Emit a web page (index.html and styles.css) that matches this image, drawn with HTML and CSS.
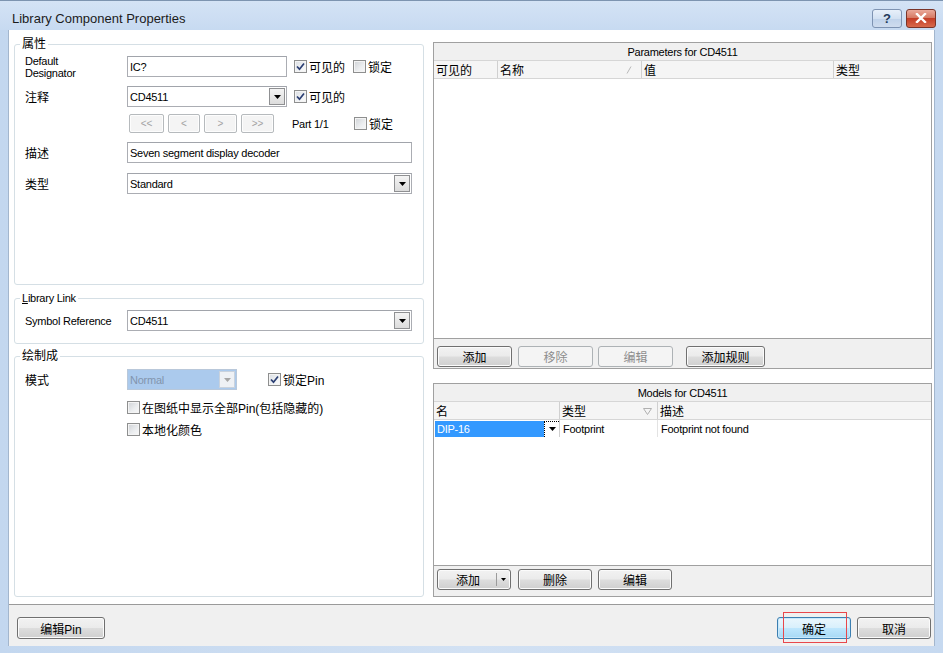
FILE: index.html
```html
<!DOCTYPE html>
<html>
<head>
<meta charset="utf-8">
<link rel="stylesheet" href="styles.css">
</head>
<body>
<div class="window">
  <div class="titlebar">
    <div class="title">Library Component Properties</div>
    <div class="tbtn help">?</div>
    <div class="tbtn close"><svg width="12" height="10" viewBox="0 0 12 10"><path d="M2 1 L10 9 M10 1 L2 9" stroke="#fff" stroke-width="2.4" stroke-linecap="square"/></svg></div>
  </div>
  <div class="client">
    <div class="main">
      <div class="left">
        <fieldset class="grp g1">
          <legend>属性</legend>
          <div class="row r1">
            <div class="lbl en two">Default<br>Designator</div>
            <div class="input w160 en">IC?</div>
            <div class="chk ml7"><span class="cb on"><svg width="9" height="9" viewBox="0 0 9 9"><path d="M1 4.5 L3.5 7.2 L8 1.5" fill="none" stroke="#2b3f73" stroke-width="1.7"/></svg></span>可见的</div>
            <div class="chk ml8"><span class="cb"></span>锁定</div>
          </div>
          <div class="row r2">
            <div class="lbl">注释</div>
            <div class="combo w160 en"><span class="ctext">CD4511</span><span class="dd"><svg width="7" height="4" viewBox="0 0 7 4"><path d="M0 0 H7 L3.5 4 Z" fill="#000"/></svg></span></div>
            <div class="chk ml7"><span class="cb on"><svg width="9" height="9" viewBox="0 0 9 9"><path d="M1 4.5 L3.5 7.2 L8 1.5" fill="none" stroke="#2b3f73" stroke-width="1.7"/></svg></span>可见的</div>
          </div>
          <div class="row r3">
            <div class="lbl"></div>
            <div class="nav">
              <div class="nbtn w35">&lt;&lt;</div>
              <div class="nbtn w32">&lt;</div>
              <div class="nbtn w33">&gt;</div>
              <div class="nbtn w33">&gt;&gt;</div>
            </div>
            <div class="part en">Part 1/1</div>
            <div class="chk"><span class="cb"></span>锁定</div>
          </div>
          <div class="row r4">
            <div class="lbl">描述</div>
            <div class="input w285 en">Seven segment display decoder</div>
          </div>
          <div class="row r5">
            <div class="lbl">类型</div>
            <div class="combo w285 en"><span class="ctext">Standard</span><span class="dd"><svg width="7" height="4" viewBox="0 0 7 4"><path d="M0 0 H7 L3.5 4 Z" fill="#000"/></svg></span></div>
          </div>
        </fieldset>

        <fieldset class="grp g2">
          <legend class="en"><u>L</u>ibrary Link</legend>
          <div class="row r6">
            <div class="lbl en">Symbol Reference</div>
            <div class="combo w285 en"><span class="ctext">CD4511</span><span class="dd"><svg width="7" height="4" viewBox="0 0 7 4"><path d="M0 0 H7 L3.5 4 Z" fill="#000"/></svg></span></div>
          </div>
        </fieldset>

        <fieldset class="grp g3">
          <legend>绘制成</legend>
          <div class="row r7">
            <div class="lbl">模式</div>
            <div class="combo dis w110 en"><span class="ctext">Normal</span><span class="dd"><svg width="7" height="4" viewBox="0 0 7 4"><path d="M0 0 H7 L3.5 4 Z" fill="#a6a6a6"/></svg></span></div>
            <div class="chk ml31"><span class="cb on"><svg width="9" height="9" viewBox="0 0 9 9"><path d="M1 4.5 L3.5 7.2 L8 1.5" fill="none" stroke="#2b3f73" stroke-width="1.7"/></svg></span>锁定Pin</div>
          </div>
          <div class="row r8">
            <div class="lbl"></div>
            <div class="chk"><span class="cb"></span>在图纸中显示全部Pin(包括隐藏的)</div>
          </div>
          <div class="row r9">
            <div class="lbl"></div>
            <div class="chk"><span class="cb"></span>本地化颜色</div>
          </div>
        </fieldset>
      </div>

      <div class="right">
        <div class="panel params">
          <div class="ptitle en">Parameters for CD4511</div>
          <div class="phead">
            <div class="hc pc1">可见的</div>
            <div class="hc pc2">名称<span class="sort"><svg width="6" height="8" viewBox="0 0 6 8"><path d="M1 7.5 L5 0.5" stroke="#b8b8b8" stroke-width="1"/></svg></span></div>
            <div class="hc pc3">值</div>
            <div class="hc pc4">类型</div>
          </div>
          <div class="plist"></div>
          <div class="pbtns">
            <div class="btn w75">添加</div>
            <div class="btn w75 disabled ml6">移除</div>
            <div class="btn w75 disabled ml5">编辑</div>
            <div class="btn w79 ml13">添加规则</div>
          </div>
        </div>

        <div class="panel models">
          <div class="ptitle en">Models for CD4511</div>
          <div class="phead">
            <div class="hc mc1">名</div>
            <div class="hc mc2">类型<span class="sort2"><svg width="9" height="7" viewBox="0 0 9 7"><path d="M0.5 0.5 H8.5 L4.5 6.5 Z" fill="none" stroke="#b0b0b0" stroke-width="1"/></svg></span></div>
            <div class="hc mc3">描述</div>
          </div>
          <div class="mrow">
            <div class="rc mc1 sel"><span class="seltext en">DIP-16</span><span class="rdd"><svg width="7" height="4" viewBox="0 0 7 4"><path d="M0 0 H7 L3.5 4 Z" fill="#000"/></svg></span></div>
            <div class="rc mc2 en">Footprint</div>
            <div class="rc mc3 en">Footprint not found</div>
          </div>
          <div class="plist"></div>
          <div class="pbtns mb">
            <div class="btn split w74"><span class="sl">添加</span><span class="sr"><svg width="5" height="3" viewBox="0 0 5 3"><path d="M0 0 H5 L2.5 3 Z" fill="#000"/></svg></span></div>
            <div class="btn w74 ml7">删除</div>
            <div class="btn w74 ml6">编辑</div>
          </div>
        </div>
      </div>
    </div>

    <div class="footer">
      <div class="btn fb w88">编辑Pin</div>
      <div class="spacer"></div>
      <div class="okwrap">
        <div class="btn fb w74 default">确定</div>
        <div class="redmark"></div>
      </div>
      <div class="btn fb w74 ml6">取消</div>
    </div>
  </div>
</div>
</body>
</html>
```

FILE: styles.css
```css
* { box-sizing: border-box; }

body {
  margin: 0;
  font-family: "Liberation Sans", "Noto Sans CJK SC", sans-serif;
  font-size: 12px;
  color: #000;
  background: #fff;
}

.en { font-size: 11px; letter-spacing: -0.25px; }

.window {
  width: 943px;
  height: 653px;
  display: flex;
  flex-direction: column;
  background: linear-gradient(90deg, #c3d7ef 0%, #d2e1f3 50%, #c6d9f0 100%);
  border-top: 1px solid #7d94b0;
}

.titlebar {
  height: 29px;
  display: flex;
  align-items: center;
  padding: 5px 7px 0 12px;
  background: linear-gradient(180deg, #d4e3f5 0%, #c7daf1 100%);
}

.title {
  flex: 1;
  font-size: 13px;
  color: #1b1b1b;
}

.tbtn {
  height: 19px;
  width: 30px;
  border-radius: 3px;
  display: flex;
  align-items: center;
  justify-content: center;
}

.help {
  border: 1px solid #7e93b2;
  background: linear-gradient(180deg, #e8f0fa 0%, #d3e1f2 50%, #bfd2ea 51%, #cfdcee 100%);
  color: #23395a;
  font-size: 13px;
  font-weight: bold;
  margin-right: 4px;
}

.close {
  border: 1px solid #7a3428;
  background: linear-gradient(180deg, #eaa99a 0%, #d67a64 45%, #c43e27 50%, #d86a4c 100%);
}

.client {
  margin: 0 8px 7px 8px;
  flex: 1;
  display: flex;
  flex-direction: column;
  background: #fff;
  border-left: 1px solid #a3b6cd;
  border-right: 1px solid #a3b6cd;
}

.main {
  height: 574px;
  display: flex;
  padding: 7px 2px 7px 5px;
  background: #fff;
}

.left {
  width: 410px;
  display: flex;
  flex-direction: column;
  margin-right: 9px;
}

.grp {
  margin: 0;
  border: 1px solid #d5dfe5;
  border-radius: 3px;
  padding: 5px 11px 0 10px;
  min-width: 0;
}

.grp legend {
  padding: 0 2px;
  margin-left: -5px;
  line-height: 14px;
  height: 14px;
}

.g1 { padding-bottom: 90px; }
.g2 { margin-top: 6px; padding-bottom: 12px; }
.g3 { margin-top: 5px; padding-top: 6px; flex: 1; }

.row {
  display: flex;
  align-items: center;
  height: 21px;
}

.r2 { margin-top: 9px; }
.r3 { margin-top: 7px; height: 19px; }
.r4 { margin-top: 9px; }
.r5 { margin-top: 10px; }
.r8 { margin-top: 9px; height: 16px; }
.r9 { margin-top: 6px; height: 16px; }

.lbl {
  width: 102px;
  flex-shrink: 0;
}

.lbl.two { line-height: 12px; }

.input, .combo {
  height: 21px;
  border: 1px solid #abadb3;
  border-top-color: #a1a4ab;
  display: flex;
  align-items: center;
  padding-left: 2px;
  background: #fff;
}

.combo { padding-right: 1px; }

.ctext { flex: 1; }

.dd {
  width: 16px;
  height: 17px;
  border: 1px solid #8f9092;
  background: linear-gradient(180deg, #f4f4f4 0%, #dcdcdc 100%);
  display: flex;
  align-items: center;
  justify-content: center;
}

.combo.dis {
  background: #abcaed;
  border-color: #b9c8da;
  color: #8295ae;
}

.combo.dis .dd {
  background: #eef1f5;
  border-color: #c9d2dd;
}

.w110 { width: 110px; }
.w160 { width: 160px; }
.w285 { width: 285px; }

.chk {
  display: flex;
  align-items: center;
  white-space: nowrap;
}

.cb {
  width: 13px;
  height: 13px;
  border: 1px solid #8e8f8f;
  background: linear-gradient(135deg, #cfd2d6 0%, #eceef0 60%, #f8f8f8 100%);
  box-shadow: inset 0 0 0 1px #f4f4f4;
  margin-right: 2px;
  display: flex;
  align-items: center;
  justify-content: center;
}

.cb.on {
  background: linear-gradient(135deg, #d9dde2 0%, #f1f3f5 60%, #fbfbfb 100%);
}

.ml7 { margin-left: 7px; }
.ml8 { margin-left: 8px; }
.ml31 { margin-left: 31px; }
.ml5 { margin-left: 5px; }
.ml6 { margin-left: 6px; }
.ml13 { margin-left: 13px; }

.nav {
  width: 160px;
  display: flex;
  gap: 4px;
  padding-left: 2px;
}

.nbtn {
  height: 19px;
  border: 1px solid #b6babd;
  border-radius: 2px;
  background: #f4f4f4;
  box-shadow: inset 0 0 0 1px #fdfdfd;
  color: #a3a3a3;
  font-size: 10px;
  display: flex;
  align-items: center;
  justify-content: center;
}

.w32 { width: 32px; }
.w33 { width: 33px; }
.w35 { width: 35px; }

.part {
  width: 67px;
  padding-left: 5px;
}

.right {
  width: 500px;
  display: flex;
  flex-direction: column;
}

.panel {
  border: 1px solid #a0a0a0;
  display: flex;
  flex-direction: column;
  background: #fff;
}

.params {
  margin-top: 5px;
  height: 327px;
}

.models {
  margin-top: 14px;
  flex: 1;
}

.ptitle {
  height: 18px;
  background: #f0f0f0;
  border-bottom: 1px solid #d6d6d6;
  display: flex;
  align-items: center;
  justify-content: center;
}

.phead {
  height: 18px;
  display: flex;
  background: #f5f5f5;
  border-bottom: 1px solid #d6d6d6;
}

.hc {
  height: 100%;
  display: flex;
  align-items: center;
  padding-left: 2px;
  border-right: 1px solid #d0d0d0;
  position: relative;
}

.pc1 { width: 64px; }
.pc2 { width: 144px; }
.pc3 { width: 192px; }
.pc4 { flex: 1; border-right: none; }

.sort {
  position: absolute;
  left: 128px;
  top: 5px;
  display: flex;
}

.sort2 {
  position: absolute;
  left: 83px;
  top: 6px;
  display: flex;
}

.mc1 { width: 126px; }
.mc2 { width: 98px; }
.mc3 { flex: 1; border-right: none; }

.plist { flex: 1; background: #fff; }

.mrow {
  height: 17px;
  display: flex;
}

.rc {
  height: 100%;
  display: flex;
  align-items: center;
  padding-left: 3px;
  border-right: 1px solid #e3e3e3;
}

.rc.mc3 { border-right: none; }

.rc.sel {
  padding-left: 1px;
  padding-right: 0;
  border-right: 1px solid #d0d0d0;
}

.seltext {
  width: 109px;
  height: 16px;
  background: #3399ff;
  color: #fff;
  display: flex;
  align-items: center;
  padding-left: 2px;
}

.rdd {
  flex: 1;
  height: 16px;
  border-left: 1px dotted #000;
  border-top: 1px dotted #000;
  display: flex;
  align-items: center;
  justify-content: center;
}

.pbtns {
  height: 30px;
  border-top: 1px solid #a0a0a0;
  background: #f0f0f0;
  display: flex;
  align-items: flex-start;
  padding: 7px 0 0 3px;
}

.pbtns.mb {
  height: 31px;
  padding-top: 3px;
}

.btn {
  height: 21px;
  border: 1px solid #707070;
  border-radius: 3px;
  background: linear-gradient(180deg, #f2f2f2 0%, #ebebeb 48%, #dddddd 52%, #cfcfcf 100%);
  box-shadow: inset 0 0 0 1px #fbfbfb;
  display: flex;
  align-items: center;
  justify-content: center;
  flex-shrink: 0;
}

.btn.disabled {
  border-color: #adb2b5;
  background: #f4f4f4;
  box-shadow: none;
  color: #8d8d8d;
}

.w74 { width: 74px; }
.w75 { width: 75px; }
.w79 { width: 79px; }
.w88 { width: 88px; }

.split { justify-content: flex-start; }
.split .sl {
  width: 58px;
  text-align: center;
  padding-left: 2px;
}
.split .sr {
  flex: 1;
  height: 13px;
  border-left: 1px solid #9b9b9b;
  display: flex;
  align-items: center;
  justify-content: center;
}

.footer {
  flex: 1;
  border-top: 1px solid #9a9a9a;
  background: #f0f0f0;
  display: flex;
  align-items: flex-start;
  padding: 12px 3px 0 8px;
}

.btn.fb { height: 22px; }

.spacer { flex: 1; }

.okwrap { position: relative; }

.btn.default {
  border-color: #3c7fb1;
  background: linear-gradient(180deg, #eaf6fd 0%, #d9f0fc 48%, #bee6fd 52%, #a7d9f5 100%);
  box-shadow: inset 0 0 0 1px #c8e8fb;
}

.redmark {
  position: absolute;
  left: 6px;
  top: -5px;
  width: 64px;
  height: 31px;
  border: 1px solid #e8474c;
}
```
